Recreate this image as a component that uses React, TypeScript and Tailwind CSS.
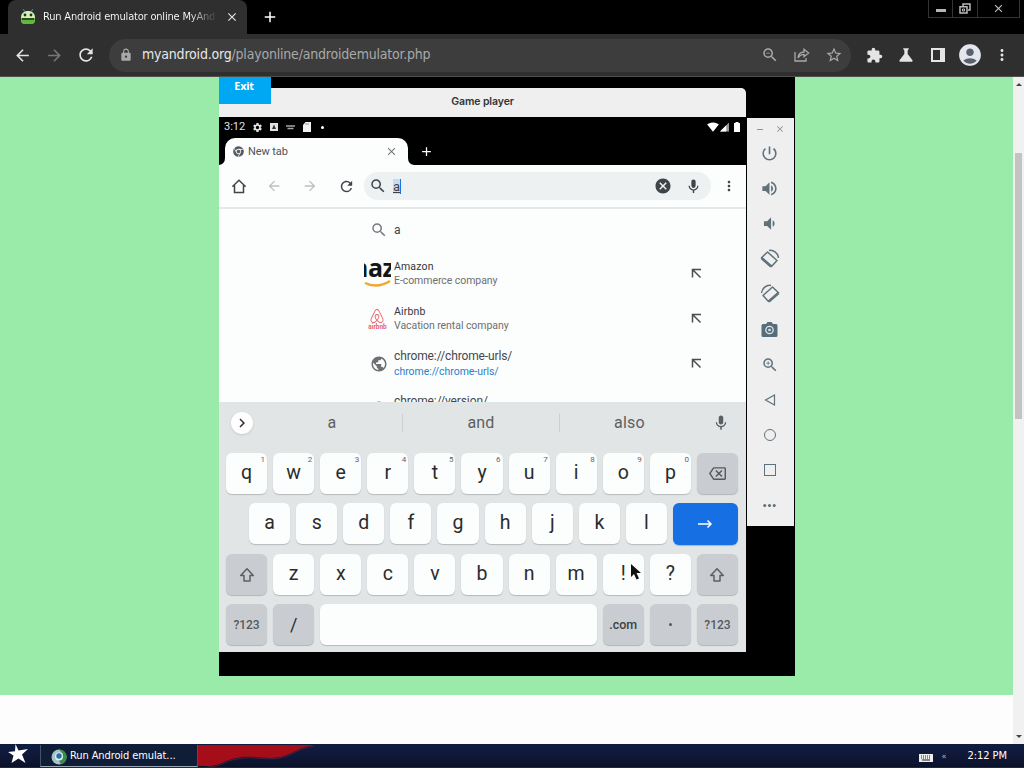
import type { ReactNode } from 'react';
import { FaAirbnb, FaChrome } from 'react-icons/fa';
import {
  MdAccountCircle,
  MdAdd,
  MdArrowBack,
  MdArrowForward,
  MdCancel,
  MdChevronRight,
  MdClose,
  MdHttps,
  MdMic,
  MdMoreHoriz,
  MdMoreVert,
  MdOutlineBackspace,
  MdPowerSettingsNew,
  MdPublic,
  MdRefresh,
  MdScience,
  MdSearch,
  MdSettings,
  MdSignalWifi4Bar,
  MdStarBorder,
  MdVolumeDown,
  MdVolumeUp,
  MdZoomIn,
  MdZoomOut,
} from 'react-icons/md';

const topRow = ['q', 'w', 'e', 'r', 't', 'y', 'u', 'i', 'o', 'p'];
const homeRow = ['a', 's', 'd', 'f', 'g', 'h', 'j', 'k', 'l'];
const bottomRow = ['z', 'x', 'c', 'v', 'b', 'n', 'm', '!', '?'];

function Slot({ children }: { children: ReactNode }) {
  return <div className="flex w-8 shrink-0 items-center justify-center">{children}</div>;
}

function AndroidIcon() {
  return (
    <svg width="16" height="16" viewBox="0 0 16 16">
      <path d="M3 0l2 3M13 0l-2 3" stroke="#2a7f9a" strokeWidth="1.3" />
      <path d="M1 9C1 4 4 2 8 2s7 2 7 7z" fill="#d5efb4" />
      <path d="M1 9h14v4l-2 2H3l-2-2z" fill="#62b63c" />
      <path d="M2 10h12" stroke="#1c3520" strokeWidth="1.6" />
      <circle cx="5" cy="6" r="1.4" fill="#1c3520" />
      <circle cx="11" cy="6" r="1.4" fill="#1c3520" />
    </svg>
  );
}

function ShareIcon() {
  return (
    <svg width="16" height="14" viewBox="0 0 16 14" fill="none" stroke="#a9a9a9" strokeWidth="1.3">
      <path d="M1 4v9h11v-3" />
      <path d="M4 10c.4-4 3-6 6-6V1.3L14.6 5 10 8.700V6.300C7 6.300 5.500 7.500 4 10z" />
    </svg>
  );
}

function PuzzleIcon() {
  return (
    <svg width="17" height="17" viewBox="0 0 24 24" fill="currentColor">
      <path d="M20.500 11H19V7c0-1.100-.9-2-2-2h-4V3.500a2.500 2.500 0 0 0-5 0V5H4c-1.100 0-2 .9-2 2v3.800h1.500c1.500 0 2.700 1.200 2.700 2.700S5 16.200 3.500 16.200H2V20c0 1.100.9 2 2 2h3.800v-1.500c0-1.500 1.200-2.700 2.700-2.700s2.700 1.200 2.700 2.700V22H17c1.100 0 2-.9 2-2v-4h1.500a2.500 2.500 0 0 0 0-5z" />
    </svg>
  );
}

function HomeIcon() {
  return (
    <svg width="14" height="15" viewBox="0 0 14 15" fill="none" stroke="currentColor" strokeWidth="1.500">
      <path d="M2.500 13.500V7H1L7 1.300 13 7h-1.500v6.500z" />
    </svg>
  );
}

function InsertArrow() {
  return (
    <svg width="11" height="11" viewBox="0 0 11 11" fill="none" stroke="#4a4d50" strokeWidth="1.500" className="mr-[44px] ml-auto">
      <path d="M1.500 9.500v-8h8.500M1.500 1.500l8 8" />
    </svg>
  );
}

function CameraIcon() {
  return (
    <svg width="17" height="15" viewBox="0 0 17 15">
      <path d="M2 2h3l1.500-2h4L12 2h3a1.500 1.500 0 0 1 1.500 1.500v10A1.500 1.500 0 0 1 15 15H2A1.500 1.500 0 0 1 .5 13.500v-10A1.500 1.500 0 0 1 2 2z" fill="#566d7a" />
      <circle cx="8.500" cy="8" r="3.700" fill="none" stroke="#dfe5e8" strokeWidth="1.300" />
      <circle cx="8.500" cy="8" r="1.300" fill="#dfe5e8" />
    </svg>
  );
}

function RotateIcon({ flip = false }: { flip?: boolean }) {
  return (
    <svg
      width="20"
      height="20"
      viewBox="0 0 20 20"
      fill="none"
      stroke="#5f727c"
      className={flip ? '-scale-x-100' : ''}
    >
      <path d="M1.500 8.700L7.500 3l9.500 8.500-5.500 6z" strokeWidth="1.500" strokeLinejoin="round" />
      <path d="M1.500 9l9.700 8.500" strokeWidth="2.600" />
      <path d="M9 1.500c4.500-.8 9 2.500 9.500 7.500" strokeWidth="1.500" />
    </svg>
  );
}

function ShiftIcon() {
  return (
    <svg width="16" height="16" viewBox="0 0 16 16" fill="none" stroke="#5c6064" strokeWidth="1.500" strokeLinejoin="round">
      <path d="M8 1.700L14.300 8.500H11V14H5V8.500H1.700z" />
    </svg>
  );
}

function BrowserTabs() {
  return (
    <div className="flex h-[34px] bg-black">
      <div className="ml-2 flex w-[239px] items-center rounded-t-lg bg-[#2f2f2f] pl-3">
        <AndroidIcon />
        <div className="ml-[7px] w-[172px] overflow-hidden whitespace-nowrap bg-linear-to-r from-white from-85% to-[#444] bg-clip-text text-[11px] tracking-[-0.19px] text-transparent">
          Run Android emulator online MyAnd
        </div>
        <MdClose className="ml-2.5 size-[14px] text-[#e4e4e4]" />
      </div>
      <MdAdd className="mt-2 ml-3.5 size-[18px] text-white" />
      <div className="ml-auto mr-1 flex h-[18px] w-[92px] border border-t-0 border-[#343434] text-[#c5c5c5]">
        <div className="flex w-6 justify-center border-r border-[#343434]">
          <div className="mt-[9px] h-[3px] w-[10px] bg-[#b5b5b5]" />
        </div>
        <div className="flex w-[25px] justify-center border-r border-[#343434] pt-[3px]">
          <svg width="12" height="11" viewBox="0 0 12 11" fill="none" stroke="#bbb" strokeWidth="1.500">
            <path d="M4 3V1h7v6H9" />
            <path d="M1 3.700h7V10H1z" />
            <path d="M3.500 6h2v2h-2z" strokeWidth="1" />
          </svg>
        </div>
        <div className="flex flex-1 justify-center pt-0.5">
          <MdClose className="size-[13px]" />
        </div>
      </div>
    </div>
  );
}

function BrowserToolbar() {
  return (
    <div className="flex h-[43px] items-center border-b border-[#505050] bg-[#2f2f2f] pl-1.5 text-[#e4e4e4]">
      <Slot><MdArrowBack className="size-[19px]" /></Slot>
      <Slot><MdArrowForward className="size-[19px] text-[#777]" /></Slot>
      <Slot><MdRefresh className="size-5" /></Slot>
      <div className="ml-[7px] flex h-[33px] w-[742px] items-center rounded-full bg-[#3d3d3d] text-[#a9a9a9]">
        <MdHttps className="ml-[10px] size-[14px]" />
        <div className="ml-[9px] pb-0.5 text-[14px] tracking-[-0.2px] whitespace-nowrap">
          <span className="text-[#e8e8e8]">myandroid.org</span>/playonline/androidemulator.php
        </div>
        <div className="mr-px ml-auto flex">
          <Slot><MdZoomOut className="size-[18px]" /></Slot>
          <Slot><ShareIcon /></Slot>
          <Slot><MdStarBorder className="size-[18px]" /></Slot>
        </div>
      </div>
      <div className="ml-[7px] flex">
        <Slot><PuzzleIcon /></Slot>
        <Slot><MdScience className="size-[20px]" /></Slot>
        <Slot>
          <svg width="14" height="14" viewBox="0 0 14 14">
            <path d="M1 1h12v12H1z" fill="none" stroke="#e4e4e4" strokeWidth="2" />
            <path d="M9 1h5v12H9z" fill="#e4e4e4" />
          </svg>
        </Slot>
        <Slot>
          <div className="flex size-[22px] items-center justify-center rounded-full bg-[#59616f]">
            <MdAccountCircle className="size-[26px] shrink-0 text-[#e3e6ec]" />
          </div>
        </Slot>
        <Slot><MdMoreVert className="size-[18px]" /></Slot>
      </div>
    </div>
  );
}

function StatusBar() {
  return (
    <div className="flex h-5 items-center bg-black pr-1.5 pl-[5px] text-[11px] text-[#e2e2e2]">
      <span className="w-[27px]">3:12</span>
      <MdSettings className="ml-px size-[11px]" />
      <svg width="8" height="8" viewBox="0 0 8 8" className="ml-[7px]">
        <path d="M0 0h8v8H0z" fill="#e2e2e2" />
        <path d="M4 1.500L6 6H2z" fill="#333" />
      </svg>
      <svg width="9" height="5" viewBox="0 0 9 5" className="ml-[8px]">
        <path d="M0 1h9M1.500 3.500h6" stroke="#a5a5a5" strokeWidth="1.300" />
      </svg>
      <svg width="8" height="10" viewBox="0 0 8 10" className="ml-2">
        <path d="M2.500 0H8v10H0V3z" fill="#f2f2f2" />
        <path d="M3 1v2M5 1v2" stroke="#888" strokeWidth=".8" />
      </svg>
      <div className="ml-[10px] size-[3px] rounded-full bg-white" />
      <MdSignalWifi4Bar className="ml-auto size-[12px] text-white" />
      <svg width="9" height="10" viewBox="0 0 10 10" className="ml-px">
        <path d="M10 0v10H0z" fill="#999" />
        <path d="M7 3v7H0z" fill="#fff" />
      </svg>
      <svg width="6" height="10" viewBox="0 0 6 10" className="ml-[5px]">
        <path d="M1.500 0h3v1H6v9H0V1h1.500z" fill="#fff" />
      </svg>
    </div>
  );
}

function PhoneTabs() {
  return (
    <div className="flex h-7 bg-black">
      <svg width="6" height="28" viewBox="0 0 6 28" className="shrink-0">
        <path d="M0 28Q6 27 6 21V28z" fill="#fcfdfd" />
      </svg>
      <div className="mt-px flex w-[183px] items-center rounded-t-[10px] bg-[#fcfdfd] pl-2 text-[11px] text-[#4e5356]">
        <FaChrome className="size-[11px] text-[#555a5e]" />
        <span className="ml-[4px] pt-px tracking-[-0.1px]">New tab</span>
        <MdClose className="ml-auto mr-[10px] size-[13px] text-[#777]" />
      </div>
      <svg width="6" height="28" viewBox="0 0 6 28" className="shrink-0">
        <path d="M6 28Q0 27 0 21V28z" fill="#fcfdfd" />
      </svg>
      <MdAdd className="mt-[7px] ml-[5px] size-[15px] text-white" />
    </div>
  );
}

function PhoneToolbar() {
  return (
    <div className="flex h-[42px] shrink-0 items-center bg-[#fcfdfd] pl-[2px] text-[#3f4448]">
      <div className="flex w-[35px] justify-center"><HomeIcon /></div>
      <div className="flex w-[36px] justify-center"><MdArrowBack className="size-4 text-[#bcbfc1]" /></div>
      <div className="flex w-[36px] justify-center"><MdArrowForward className="size-4 text-[#bcbfc1]" /></div>
      <div className="flex w-[36px] justify-center"><MdRefresh className="size-[17px]" /></div>
      <div className="flex h-[28px] w-[347px] items-center rounded-full bg-[#edf1f2]">
        <MdSearch className="ml-[5px] size-[18px]" />
        <div className="ml-[6px] h-[15px] border-r border-[#1a73e8] bg-[#c8dcef] text-[13px] leading-[15px] underline">a</div>
        <MdCancel className="ml-auto size-[18px]" />
        <MdMic className="ml-[13px] mr-[9px] size-[17px]" />
      </div>
      <MdMoreVert className="ml-[10px] size-4" />
    </div>
  );
}

function Suggestion({ icon, title, detail, link = false }: { icon: ReactNode; title: string; detail: string; link?: boolean }) {
  return (
    <div className="flex h-[45px] shrink-0 items-center">
      <div className="flex w-[32px] justify-center">{icon}</div>
      <div className="pt-px whitespace-nowrap">
        <div className={link ? 'text-[12px] leading-[15px] tracking-[-0.12px] text-[#44484c]' : 'text-[10.500px] leading-[14px] tracking-[0.15px] text-[#34383b]'}>{title}</div>
        <div className={link ? 'text-[10.500px] leading-[15px] tracking-[-0.05px] text-[#2a80cf]' : 'text-[10.500px] leading-[14px] tracking-[-0.06px] text-[#6c7073]'}>{detail}</div>
      </div>
      <InsertArrow />
    </div>
  );
}

function AmazonLogo() {
  return (
    <div className="mr-0.5 flex h-[30px] w-[27px] flex-col overflow-hidden">
      <div className="flex h-[20px] w-[27px] justify-center overflow-hidden font-['Open_Sans'] text-[25px] leading-[17px] font-bold tracking-[-0.500px] text-[#161616]">
        <span className="-ml-[16px]">maz</span>
      </div>
      <svg width="27" height="9" viewBox="0 0 27 9" className="shrink-0">
        <path d="M1 4c8 4 17 3 25-2" fill="none" stroke="#f3a62f" strokeWidth="2.500" />
      </svg>
    </div>
  );
}

function AirbnbLogo() {
  return (
    <div className="mr-px flex flex-col items-center text-[#e9636b]">
      <FaAirbnb className="size-[16px]" />
      <span className="text-[6.500px] leading-[6px] font-bold">airbnb</span>
    </div>
  );
}

function Suggestions() {
  return (
    <div className="flex h-[195px] flex-col overflow-hidden border-t-2 border-[#e6e9e9] bg-[#fcfdfd] pl-[143px]">
      <div className="flex h-[42px] shrink-0 items-center pb-px">
        <MdSearch className="ml-[8px] size-[18px] text-[#777c80]" />
        <span className="ml-[6px] text-[12px] text-[#3f4448]">a</span>
      </div>
      <Suggestion icon={<AmazonLogo />} title="Amazon" detail="E-commerce company" />
      <Suggestion icon={<AirbnbLogo />} title="Airbnb" detail="Vacation rental company" />
      <Suggestion
        icon={<MdPublic className="ml-px size-[18px] text-[#6c7073]" />}
        title="chrome://chrome-urls/"
        detail="chrome://chrome-urls/"
        link
      />
      <Suggestion
        icon={<MdPublic className="ml-px size-[18px] text-[#6c7073]" />}
        title="chrome://version/"
        detail="chrome://version/"
        link
      />
    </div>
  );
}

function Key({ label, hint }: { label: string; hint?: string }) {
  return (
    <div className="relative flex h-[41px] items-center justify-center rounded-md bg-[#fcfdfd] pb-0.5 text-[19.500px] text-[#292c2e] shadow-[0_1px_1px_#b6babd]">
      {label}
      {hint && <span className="absolute top-[3px] right-[2px] text-[8px] leading-[8px] text-[#5f6366]">{hint}</span>}
    </div>
  );
}

function ActionKey({ children }: { children: ReactNode }) {
  return (
    <div className="flex h-[41px] items-center justify-center rounded-md bg-[#c9cdd1] text-[12px] font-medium text-[#55595d] shadow-[0_1px_1px_#b0b4b7]">
      {children}
    </div>
  );
}

function Keyboard() {
  return (
    <div className="z-10 flex h-[250px] flex-col bg-[#e2e5e6] pr-2 pl-[7px]">
      <div className="flex h-[41px] shrink-0 items-center text-[16px] tracking-[0.2px] text-[#5a5f63]">
        <div className="ml-[5px] flex size-[22px] items-center justify-center rounded-full bg-white shadow-sm">
          <MdChevronRight className="size-[18px] text-[#333]" />
        </div>
        <div className="ml-[9px] w-[140px] text-center">a</div>
        <div className="h-[18px] w-px bg-[#cbcfd0]" />
        <div className="w-[156px] text-center">and</div>
        <div className="h-[18px] w-px bg-[#cbcfd0]" />
        <div className="w-[139px] text-center">also</div>
        <MdMic className="ml-[13px] size-[18px]" />
      </div>
      <div className="mt-[10px] grid grid-cols-11 gap-x-1.5">
        {topRow.map((k, i) => (
          <Key key={k} label={k} hint={String((i + 1) % 10)} />
        ))}
        <ActionKey><MdOutlineBackspace className="size-[17px]" /></ActionKey>
      </div>
      <div className="mt-[9px] flex gap-x-1.5 pl-[23px]">
        <div className="grid w-[418px] grid-cols-9 gap-x-1.5">
          {homeRow.map(k => (
            <Key key={k} label={k} />
          ))}
        </div>
        <div className="flex h-[42px] flex-1 items-center justify-center rounded-md bg-[#176fe4] text-white shadow-[0_1px_1px_#9bb9df]">
          <svg width="15" height="10" viewBox="0 0 15 10" fill="none" stroke="currentColor" strokeWidth="1.500">
            <path d="M0 5h13M9.500 1.500L13 5l-3.500 3.500" />
          </svg>
        </div>
      </div>
      <div className="mt-[9px] grid grid-cols-11 gap-x-1.5">
        <ActionKey><ShiftIcon /></ActionKey>
        {bottomRow.map(k => (
          <Key key={k} label={k} />
        ))}
        <ActionKey><ShiftIcon /></ActionKey>
      </div>
      <div className="mt-[9px] grid grid-cols-11 gap-x-1.5">
        <ActionKey>?123</ActionKey>
        <ActionKey><span className="text-[18px] font-normal text-[#292c2e]">/</span></ActionKey>
        <div className="col-span-6 h-[41px] rounded-md bg-[#fcfdfd] shadow-[0_1px_1px_#b6babd]" />
        <ActionKey><span className="pt-0.5 text-[12.500px] text-[#3d4144]">.com</span></ActionKey>
        <ActionKey><div className="size-[3px] rounded-full bg-[#55595d]" /></ActionKey>
        <ActionKey>?123</ActionKey>
      </div>
    </div>
  );
}

function SidePanel() {
  const controls = [
    <MdPowerSettingsNew className="size-[19px]" />,
    <MdVolumeUp className="size-[19px]" />,
    <MdVolumeDown className="size-[19px]" />,
    <RotateIcon />,
    <RotateIcon flip />,
    <CameraIcon />,
    <MdZoomIn className="size-[18px]" />,
    <svg width="12" height="12" viewBox="0 0 12 12" fill="none" stroke="currentColor" strokeWidth="1.2">
      <path d="M10.500 1v10L1.500 6z" />
    </svg>,
    <div className="size-[12px] rounded-full border-[1.500px] border-current" />,
    <div className="size-[12px] border border-current" />,
    <MdMoreHoriz className="size-[19px]" />,
  ];

  return (
    <div className="mt-[41px] ml-px flex h-[408px] w-[47px] flex-col bg-[#efefef] pr-0.5 text-[#5f727c]">
      <div className="flex h-[18px] shrink-0 items-end justify-between pr-[7px] pl-[8px] text-[#8b9297]">
        <div className="mb-1.5 ml-0.5 h-px w-1.5 bg-current" />
        <MdClose className="mb-0.5 size-[10px]" />
      </div>
      {controls.map((control, i) => (
        <div key={i} className="flex h-[35.200px] shrink-0 items-center justify-center">{control}</div>
      ))}
    </div>
  );
}

function Emulator() {
  return (
    <div className="relative ml-[219px] flex h-[599px] w-[576px] bg-black font-[Roboto,sans-serif]">
      <div className="flex w-[527px] flex-col">
        <div className="mt-[11px] flex h-[29px] shrink-0 items-center justify-center rounded-t-[5px] bg-[#efefef] pb-px font-['Inter',sans-serif] text-[10.500px] font-semibold tracking-[-0.1px] text-[#343434]">
          Game player
        </div>
        <StatusBar />
        <PhoneTabs />
        <PhoneToolbar />
        <Suggestions />
        <Keyboard />
      </div>
      <SidePanel />
      <button className="absolute top-0 left-0 h-[27px] w-[52px] bg-[#00a7f2] pr-0.5 pb-2 font-['Open_Sans',sans-serif] text-[11px] font-bold tracking-[-0.3px] text-white">
        Exit
      </button>
      {/* mouse pointer over the "!" key */}
      <svg width="12" height="18" viewBox="0 0 12 18" className="absolute top-[486px] left-[411px] z-20">
        <path d="M1 1v13l3-3 2.500 5.500 2.500-1L6.500 10H11z" fill="#111" />
      </svg>
    </div>
  );
}

function Taskbar() {
  return (
    <div className="relative flex h-6 items-center overflow-hidden bg-linear-to-b from-[#111c40] via-[#0f1838] to-[#0a1128] text-[11px] text-white">
      <svg width="130" height="24" viewBox="0 0 130 24" className="absolute top-0 left-[190px]">
        <path d="M0 1h124c-14 2-20 8-30 11-16 5-32-2-47 2-13 2-16 8-30 8H0z" fill="#a50d18" />
        <path d="M124 2c-14 2-20 8-30 11-16 5-32-2-47 2-13 2-16 8-30 8" fill="none" stroke="#4d2034" />
      </svg>
      <svg width="20" height="20" viewBox="0 0 20 20" className="mb-1 ml-2 shrink-0">
        <path d="M7.500 0l3 6.500L20 5l-6 5.500L17.500 19l-7-4.500-7 4.500 2-7.500L0 8l7-.8z" fill="#fff" />
      </svg>
      <div className="relative ml-3 flex h-[22px] w-[158px] items-center border-x border-b border-x-[#46526a] border-b-[#9aa5b5] bg-[#101d36] pt-0.5 pl-2.5">
        <svg width="16" height="16" viewBox="0 0 16 16">
          <circle cx="8" cy="8" r="7.500" fill="#a7c0cc" />
          <path d="M8 .5A7.500 7.500 0 0 1 10 15.300L7 10l5-5z" fill="#3c8b48" />
          <circle cx="8" cy="7.500" r="4" fill="#e3eef2" />
          <circle cx="8" cy="7" r="2.700" fill="#276f9e" />
        </svg>
        <span className="ml-[3px] tracking-[-0.1px] whitespace-nowrap">Run Android emulat...</span>
      </div>
      <svg width="14" height="8" viewBox="0 0 14 8" className="mt-[4px] mr-1 ml-auto">
        <path d="M0 0h14v8H0z" fill="#eee" />
        <path d="M2 2h10M2 4h10" stroke="#222" strokeDasharray="1 1" />
        <path d="M3 6h8" stroke="#222" />
      </svg>
      <span className="ml-[5px] text-[9px] leading-3 text-[#aeb6ca]">«</span>
      <span className="mr-[17px] ml-[21px] pt-px tracking-[-0.050px] whitespace-nowrap">2:12 PM</span>
      <div className="absolute right-0 bottom-0 left-0 h-px bg-[#1a2466]" />
    </div>
  );
}

export default function App() {
  return (
    <div className="flex h-[768px] w-[1024px] flex-col overflow-hidden bg-white font-['DejaVu_Sans_Condensed','DejaVu_Sans',sans-serif]">
      <BrowserTabs />
      <BrowserToolbar />
      <div className="flex h-[667px]">
        <div className="w-[1013px] bg-[#fdfdfd]">
          <div className="h-[618px] bg-[#9aebaa]">
            <Emulator />
          </div>
        </div>
        <div className="flex flex-1 flex-col items-center bg-[#f1f1f1]">
          <div className="mt-1.5 border-x-[3px] border-b-[3px] border-x-transparent border-b-[#444]" />
          <div className="mt-[67px] h-[266px] w-[7px] bg-[#c3c3c3]" />
          <div className="mt-auto mb-1.5 border-x-[3px] border-t-[3px] border-x-transparent border-t-[#444]" />
        </div>
      </div>
      <Taskbar />
    </div>
  );
}
